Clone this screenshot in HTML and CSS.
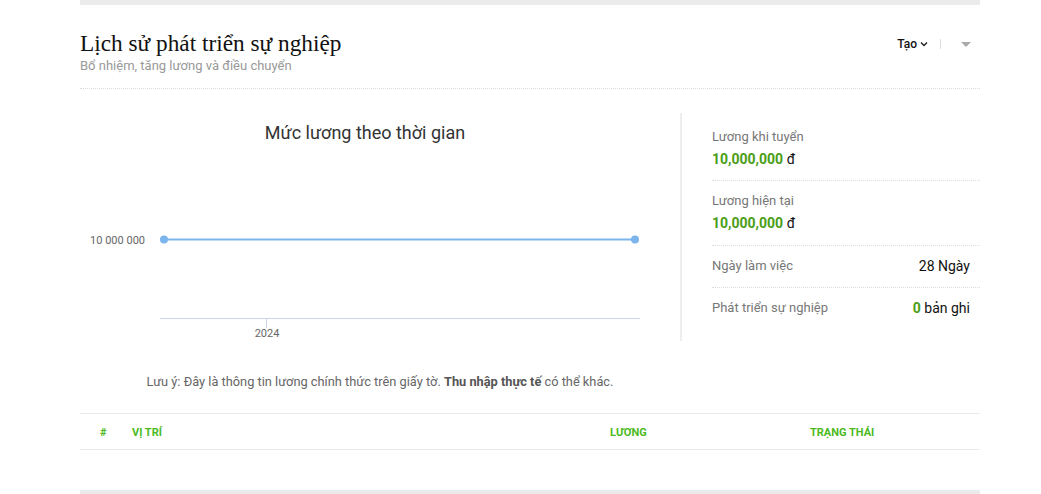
FILE: index.html
```html
<!DOCTYPE html>
<html lang="vi">
<head>
<meta charset="utf-8">
<link rel="stylesheet" href="styles.css">
</head>
<body>
<div class="page">
  <div class="topbar"></div>
  <div class="header">
    <div class="titles">
      <h1 class="title">Lịch sử phát triển sự nghiệp</h1>
      <div class="subtitle">Bổ nhiệm, tăng lương và điều chuyển</div>
    </div>
    <div class="actions">
      <span class="create">Tạo <svg class="chev" width="8" height="6" viewBox="0 0 8 6"><path d="M1 1.5 L4 4.5 L7 1.5" fill="none" stroke="#222" stroke-width="1.4"/></svg></span>
      <span class="vsep"></span>
      <span class="caret"></span>
    </div>
  </div>
  <div class="content">
    <div class="chart-col">
      <svg class="chart" width="600" height="228" viewBox="0 0 600 228">
        <text x="285" y="26" text-anchor="middle" class="chart-title">Mức lương theo thời gian</text>
        <text x="65" y="131" text-anchor="end" class="axis-label">10 000 000</text>
        <line x1="80" y1="205.5" x2="560" y2="205.5" stroke="#ccd6eb" stroke-width="1"/>
        <line x1="186.5" y1="205" x2="186.5" y2="215" stroke="#ccd6eb" stroke-width="1"/>
        <text x="187" y="224" text-anchor="middle" class="axis-label">2024</text>
        <line x1="84" y1="126.5" x2="555" y2="126.5" stroke="#7cb5ec" stroke-width="2"/>
        <circle cx="84" cy="126.5" r="4" fill="#7cb5ec"/>
        <circle cx="555" cy="126.5" r="4" fill="#7cb5ec"/>
      </svg>
    </div>
    <div class="stats">
      <div class="stat first">
        <div class="label">Lương khi tuyển</div>
        <div class="money"><b>10,000,000</b> đ</div>
      </div>
      <div class="stat">
        <div class="label">Lương hiện tại</div>
        <div class="money"><b>10,000,000</b> đ</div>
      </div>
      <div class="stat row">
        <div class="label">Ngày làm việc</div>
        <div class="val">28 Ngày</div>
      </div>
      <div class="stat row last">
        <div class="label">Phát triển sự nghiệp</div>
        <div class="val"><b>0</b> bản ghi</div>
      </div>
    </div>
  </div>
  <div class="note">Lưu ý: Đây là thông tin lương chính thức trên giấy tờ. <strong>Thu nhập thực tế</strong> có thể khác.</div>
  <div class="table-head">
    <div class="th first">#</div>
    <div class="th">VỊ TRÍ</div>
    <div class="th">LƯƠNG</div>
    <div class="th">TRẠNG THÁI</div>
  </div>
  <div class="spacer"></div>
  <div class="bottombar"></div>
</div>
</body>
</html>
```

FILE: styles.css
```css
html, body {
  margin: 0;
  padding: 0;
  background: #fff;
}
body {
  font-family: Roboto, "Liberation Sans", sans-serif;
  color: #333;
}
.page {
  width: 900px;
  margin-left: 80px;
}
.topbar, .bottombar {
  height: 5px;
  background: #ebebeb;
}
.header {
  display: flex;
  justify-content: space-between;
  align-items: flex-start;
  padding-top: 25px;
  height: 58px;
  border-bottom: 1px dotted #dcdcdc;
}
.title {
  margin: 0;
  font-family: "Liberation Serif", serif;
  font-weight: normal;
  font-size: 23.3px;
  line-height: 26px;
  color: #111;
}
.subtitle {
  font-size: 13px;
  line-height: 18px;
  color: #999;
  margin-top: 1px;
}
.actions {
  display: flex;
  align-items: center;
  gap: 12px;
  padding-top: 7px;
  padding-right: 9px;
}
.create {
  font-size: 12px;
  font-weight: 500;
  color: #111;
  display: flex;
  align-items: center;
  gap: 3px;
}
.vsep {
  width: 1px;
  height: 10px;
  background: #ddd;
}
.caret {
  width: 0;
  height: 0;
  border-left: 5px solid transparent;
  border-right: 5px solid transparent;
  border-top: 5px solid #aaa;
  margin-left: 8px;
}
.content {
  display: flex;
  margin-top: 24px;
}
.chart-col {
  width: 600px;
  border-right: 2px solid #eee;
  height: 228px;
}
.chart { display: block; }
.chart-title {
  font-family: Roboto, sans-serif;
  font-size: 18px;
  fill: #333;
}
.axis-label {
  font-family: Roboto, sans-serif;
  font-size: 11px;
  fill: #666;
}
.stats {
  flex: 1;
  padding-left: 30px;
  padding-top: 4px;
}
.stat {
  padding: 10px 10px 11px 0;
  border-bottom: 1px dotted #ddd;
}
.stat.first { padding-bottom: 10px; }
.stat .label + .money { margin-top: 1px; }
.stat.last { border-bottom: none; }
.stat.row {
  display: flex;
  justify-content: space-between;
  align-items: center;
  padding-bottom: 11px;
}
.label {
  font-size: 13px;
  line-height: 20px;
  color: #777;
}
.money {
  font-size: 14px;
  line-height: 22px;
  color: #111;
}
.money b {
  color: #4a9e17;
  font-weight: bold;
}
.val {
  font-size: 14px;
  line-height: 20px;
  color: #111;
}
.val b {
  color: #4a9e17;
}
.note {
  width: 600px;
  text-align: center;
  font-size: 12.8px;
  color: #666;
  margin-top: 32px;
  line-height: 18px;
}
.note strong { color: #555; }
.table-head {
  display: grid;
  grid-template-columns: 52px 478px 200px 1fr;
  margin-top: 22px;
  border-top: 1px solid #eaeaea;
  border-bottom: 1px solid #eaeaea;
  height: 35px;
  align-items: center;
}
.th {
  font-size: 11px;
  font-weight: bold;
  color: #4cba1e;
  padding-top: 2px;
}
.th.first { padding-left: 20px; }
.spacer { height: 40px; }
```
